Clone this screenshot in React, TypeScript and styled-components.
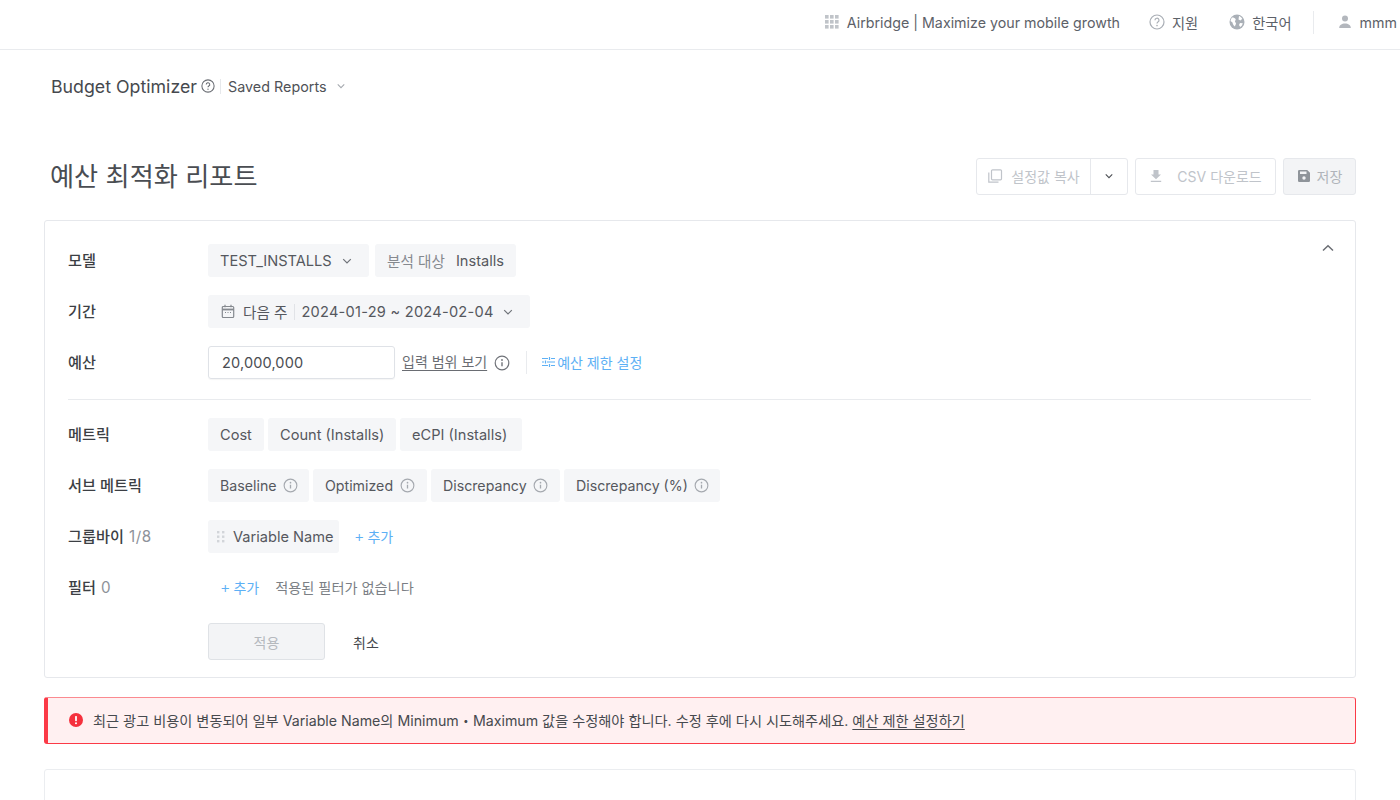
import React from "react";
import styled, { createGlobalStyle } from "styled-components";

const Global = createGlobalStyle`
  html, body { margin: 0; padding: 0; background: #fff; }
  body { font-family: Inter, "Noto Sans CJK KR", sans-serif; color: #4a4d52; overflow: hidden; height: 800px; }
  * { box-sizing: border-box; }
  svg { flex-shrink: 0; }
`;

const Page = styled.div`width: 1400px; height: 800px; overflow: hidden;`;

const TopBar = styled.header`
  height: 50px; border-bottom: 1px solid #e9ebee;
  display: flex; align-items: center; justify-content: flex-end;
  font-size: 14.25px; color: #5d6168; padding: 0 3px 5px 0;
`;
const TopItem = styled.div<{ $gap?: number; $ml?: number }>`
  display: flex; align-items: center; gap: ${p => p.$gap ?? 7}px; margin-left: ${p => p.$ml ?? 0}px; white-space: nowrap;
`;
const TopDivider = styled.div`width: 1px; height: 23px; background: #e9ebee; margin-left: 21px;`;

const SubBar = styled.div`display: flex; align-items: center; height: 24px; margin: 24px 0 0 51px;`;
const ProductTitle = styled.div`font-size: 17.75px; color: #46494e; margin-right: 4px;`;
const SubDivider = styled.div`width: 1px; height: 15px; background: #e6e8eb; margin: 0 7px 0 5px;`;
const SavedReports = styled.div`font-size: 14.35px; color: #4f5257; display: flex; align-items: center; gap: 8px;`;

const TitleRow = styled.div`
  display: flex; align-items: flex-start; justify-content: space-between;
  padding: 0 44px 0 50px; margin-top: 60px; height: 62px;
`;
const PageTitle = styled.h1`font-size: 26.2px; font-weight: 400; margin: 0; color: #4a4d52; line-height: 37px;`;
const Actions = styled.div`display: flex; gap: 7px;`;
const GhostGroup = styled.div`display: flex; height: 37px; border: 1px solid #e6e8ec; border-radius: 3px; background: #fff;`;
const GhostPart = styled.div<{ $w: number; $divider?: boolean }>`
  width: ${p => p.$w}px; display: flex; align-items: center; justify-content: center; gap: 8px; padding-bottom: 1px;
  font-size: 14px; color: #c0c4ca; ${p => p.$divider ? "border-left: 1px solid #e6e8ec;" : ""}
`;
const CsvText = styled.span`margin-left: 6px;`;
const SaveButton = styled.div`
  width: 73px; height: 37px; background: #f3f4f6; border: 1px solid #e6e8ec; border-radius: 3px; padding-bottom: 1px;
  display: flex; align-items: center; justify-content: center; gap: 6px; font-size: 14px; color: #b0b4ba;
`;

const Card = styled.section`
  position: relative; margin: 0 44px; height: 458px; border: 1px solid #e6e8ec; border-radius: 3px;
  padding: 23px 44px 0 23px;
`;
const Collapse = styled.div`position: absolute; top: 19px; right: 19px; line-height: 0;`;
const Row = styled.div<{ $h?: number; $mb?: number }>`
  display: flex; align-items: center; height: ${p => p.$h ?? 33}px; margin-bottom: ${p => p.$mb ?? 18}px;
`;
const Label = styled.div`width: 140px; font-size: 15.2px; color: #3c3f44; font-weight: 500; flex: none; padding-bottom: 4px; white-space: nowrap;`;
const Count = styled.span`font-weight: 400; color: #8d9299; margin-left: 5px; letter-spacing: 0.6px;`;
const Controls = styled.div<{ $gap?: number }>`display: flex; align-items: center; gap: ${p => p.$gap ?? 4}px;`;
const Chip = styled.div<{ $w?: number; $pl?: number; $pr?: number; $gap?: number; $fs?: number }>`
  height: 33px; background: #f5f6f8; border-radius: 3px; display: flex; align-items: center;
  ${p => p.$w ? `width: ${p.$w}px; justify-content: space-between;` : ""}
  padding: 0 ${p => p.$pr ?? 12}px 0 ${p => p.$pl ?? 12}px; gap: ${p => p.$gap ?? 6}px;
  font-size: ${p => p.$fs ?? 14.6}px; color: #55585e; white-space: nowrap;
`;
const Muted = styled.span`color: #85898f;`;
const DateText = styled.span`letter-spacing: 0.25px;`;
const PeriodText = styled.span`margin-left: 1px;`;
const ChipDivider = styled.span`width: 1px; height: 16px; background: #e1e3e7; margin-right: -1px;`;
const BudgetInput = styled.div`
  width: 187px; height: 33px; border: 1px solid #dfe2e7; border-radius: 3px; padding-left: 13px;
  display: flex; align-items: center; font-size: 14.5px; color: #4a4d52; letter-spacing: 0.15px; margin-right: 3px;
  box-shadow: 0 1px 1px rgba(0,0,0,.04);
`;
const LinkText = styled.span`font-size: 14px; color: #6a6d73; text-decoration: underline; text-underline-offset: 3px; padding-bottom: 3px; margin-right: 3px;`;
const VSep = styled.div`width: 1px; height: 23px; background: #e9ebee; margin: 0 11px 0 12px;`;
const Blue = styled.span<{ $ml?: number }>`
  font-size: 14px; color: #5db0f5; display: inline-flex; align-items: center; gap: 2px; margin-left: ${p => p.$ml ?? 0}px; padding-bottom: 2px;
`;
const Plus = styled.span`font-size: 16px; font-weight: 300; line-height: 1; margin-right: 1px;`;
const Rule = styled.div`height: 1px; background: #e9ebee; margin: 0 0 18px 0;`;
const Hint = styled.span`font-size: 14.2px; color: #7b7f85; margin-left: 16px; padding-bottom: 2px;`;
const SpacerCol = styled.span`width: 140px; flex: none;`;
const ApplyBtn = styled.div`
  width: 117px; height: 37px; background: #f3f4f6; border: 1px solid #dfe2e6; border-radius: 3px;
  display: flex; align-items: center; justify-content: center; font-size: 14px; color: #b5b9be;
`;
const Cancel = styled.div`font-size: 14px; color: #45484d; margin-left: 28px;`;

const Banner = styled.div`
  margin: 19px 44px 0; height: 47px; background: #fff0f1; border: 1px solid #fb3a47; border-left-width: 4px;
  border-top-color: #fb8a90; border-radius: 3px; display: flex; align-items: center; padding: 0 0 2px 21px; gap: 10px;
  font-size: 14.2px; color: #46494e; white-space: nowrap;
`;
const BannerLink = styled.span`text-decoration: underline; text-underline-offset: 3px; margin-left: 4px;`;
const NextCard = styled.div`margin: 25px 44px 0; height: 60px; border: 1px solid #ebedf0; border-radius: 3px;`;

const Chev = ({ c = "#6f7379", s = 14 }: { c?: string; s?: number }) => (
  <svg width={s} height={s} viewBox="0 0 14 14" fill="none"><path d="M3.2 5.2 7 9l3.8-3.8" stroke={c} strokeWidth="1.2" /></svg>
);
const Info = ({ c = "#9ea3a9", s = 15 }: { c?: string; s?: number }) => (
  <svg width={s} height={s} viewBox="0 0 16 16" fill="none">
    <circle cx="8" cy="8" r="6.8" stroke={c} strokeWidth="1.2" />
    <circle cx="8" cy="5" r=".9" fill={c} />
    <path d="M8 7.2v4" stroke={c} strokeWidth="1.4" />
  </svg>
);
const Help = ({ c = "#a9aeb5", s = 16 }: { c?: string; s?: number }) => (
  <svg width={s} height={s} viewBox="0 0 16 16" fill="none">
    <circle cx="8" cy="8" r="7" stroke={c} strokeWidth="1.2" />
    <path d="M6 6.3A2 2 0 1 1 8.9 8c-.6.4-.9.7-.9 1.5" stroke={c} strokeWidth="1.2" />
    <circle cx="8" cy="11.6" r=".8" fill={c} />
  </svg>
);
const Grid = () => (
  <svg width="14" height="14" viewBox="0 0 14 14" fill="#c0c4c9">
    {[0, 5, 10].flatMap(y => [0, 5, 10].map(x => <rect key={`${x}-${y}`} x={x} y={y} width="3.6" height="3.6" />))}
  </svg>
);
const Globe = () => (
  <svg width="16" height="16" viewBox="0 0 16 16">
    <circle cx="8" cy="8" r="7.5" fill="#aab0b7" />
    <path d="M3 3.5c2 0 3 .6 3.6 1.6.5 1-.6 1.4-.6 2.3 0 .8 1 1 1 2s-.8 1.3-1 3c-1.5-.8-2.2-2.5-2.5-4L1.5 7C1.8 5.5 2.2 4.4 3 3.5ZM10 2c1 .3 2.5 1.3 3.3 2.8L11.5 6.5 9.5 5.5 10 2ZM11 9l2.8.2c-.3 1.500-1.200 3-2.600 3.800L10 11l1-2Z" fill="#fff" />
  </svg>
);
const User = () => (
  <svg width="16" height="16" viewBox="0 0 16 16" fill="#b3b7bd">
    <circle cx="8" cy="4.6" r="3" /><path d="M2.2 14c0-3 2.6-4.5 5.8-4.500s5.800 1.500 5.800 4.500Z" />
  </svg>
);
const Copy = () => (
  <svg width="16" height="16" viewBox="0 0 16 16" fill="none" stroke="#c0c4ca" strokeWidth="1.2">
    <rect x="4.5" y="1.8" width="10" height="10" rx="1" /><path d="M1.8 4.5v9.7h9.7" />
  </svg>
);
const Download = () => (
  <svg width="14" height="14" viewBox="0 0 14 14" fill="#c0c4ca"><path d="M4.5 1h5v4.5H12L7 10.3 2 5.5h2.500ZM1.800 11.800h10.400V13H1.800Z" /></svg>
);
const Save = () => (
  <svg width="14" height="14" viewBox="0 0 14 14" fill="#8f949a">
    <path d="M2.2 1h8L13 3.800v8A1.200 1.200 0 0 1 11.800 13H2.200A1.200 1.200 0 0 1 1 11.800V2.200A1.200 1.200 0 0 1 2.200 1Z" />
    <rect x="3" y="2.5" width="6.5" height="2.5" fill="#f3f4f6" /><circle cx="7" cy="9" r="1.7" fill="#f3f4f6" />
  </svg>
);
const Calendar = () => (
  <svg width="14" height="15" viewBox="0 0 14 15" fill="none" stroke="#85898f" strokeWidth="1.2">
    <rect x="1.3" y="2.5" width="11.4" height="11" rx="1" /><path d="M1.3 5.5h11.4" strokeWidth="1.8" /><path d="M4 .8v2.400M10 .8v2.400" /><path d="M4 8.500h1M6.500 8.500h1M9 8.500h1" />
  </svg>
);
const Sliders = () => (
  <svg width="13" height="12" viewBox="0 0 13 12" fill="none" stroke="#5db0f5" strokeWidth="1.2">
    <path d="M0 2.5h6M9 2.500h4M0 6h2M5 6h8M0 9.500h6M9 9.500h4" /><path d="M7.500 1v3M3.500 4.500v3M7.500 8v3" />
  </svg>
);
const Drag = () => (
  <svg width="8" height="12" viewBox="0 0 8 12" fill="#d2d5d9">
    {[0, 4.5, 9].flatMap(y => [0, 5].map(x => <rect key={`${x}-${y}`} x={x} y={y} width="2.4" height="2.4" />))}
  </svg>
);
const Alert = () => (
  <svg width="14" height="14" viewBox="0 0 14 14">
    <circle cx="7" cy="7" r="7" fill="#f5303d" /><rect x="6.1" y="3" width="1.8" height="5.2" rx=".6" fill="#fff" /><circle cx="7" cy="10.2" r="1.05" fill="#fff" />
  </svg>
);

const metrics = [
  { name: "Cost", w: 56 },
  { name: "Count (Installs)", w: 128 },
  { name: "eCPI (Installs)", w: 122 },
];
const subMetrics = [
  { name: "Baseline", w: 101 },
  { name: "Optimized", w: 114 },
  { name: "Discrepancy", w: 129 },
  { name: "Discrepancy (%)", w: 156 },
];

export default function App() {
  return (
    <Page>
      <Global />
      <TopBar>
        <TopItem $gap={8}><Grid />Airbridge | Maximize your mobile growth</TopItem>
        <TopItem $ml={29}><Help />지원</TopItem>
        <TopItem $ml={31}><Globe />한국어</TopItem>
        <TopDivider />
        <TopItem $ml={23}><User />mmm</TopItem>
      </TopBar>
      <SubBar>
        <ProductTitle>Budget Optimizer</ProductTitle>
        <Help c="#6a6d73" s={14} />
        <SubDivider />
        <SavedReports>Saved Reports <Chev c="#a5a9af" s={12} /></SavedReports>
      </SubBar>
      <TitleRow>
        <PageTitle>예산 최적화 리포트</PageTitle>
        <Actions>
          <GhostGroup>
            <GhostPart $w={113}><Copy />설정값 복사</GhostPart>
            <GhostPart $w={37} $divider><Chev c="#4a4d52" s={12} /></GhostPart>
          </GhostGroup>
          <GhostGroup>
            <GhostPart $w={139}><Download /><CsvText>CSV 다운로드</CsvText></GhostPart>
          </GhostGroup>
          <SaveButton><Save />저장</SaveButton>
        </Actions>
      </TitleRow>
      <Card>
        <Collapse>
          <svg width="16" height="16" viewBox="0 0 16 16" fill="none"><path d="M3 10.5 8 5.8l5 4.7" stroke="#6a6d73" strokeWidth="1.5" /></svg>
        </Collapse>
        <Row>
          <Label>모델</Label>
          <Controls $gap={6}>
            <Chip $w={161} $pr={15}>TEST_INSTALLS <Chev /></Chip>
            <Chip $w={141}><Muted>분석 대상</Muted>Installs</Chip>
          </Controls>
        </Row>
        <Row>
          <Label>기간</Label>
          <Chip $pl={13} $pr={15} $gap={7}>
            <Calendar /><PeriodText>다음 주</PeriodText><ChipDivider /><DateText>2024-01-29 ~ 2024-02-04</DateText><Chev />
          </Chip>
        </Row>
        <Row $mb={20}>
          <Label>예산</Label>
          <Controls>
            <BudgetInput>20,000,000</BudgetInput>
            <LinkText>입력 범위 보기</LinkText>
            <Info c="#707379" s={16} />
            <VSep />
            <Blue><Sliders />예산 제한 설정</Blue>
          </Controls>
        </Row>
        <Rule />
        <Row>
          <Label>메트릭</Label>
          <Controls>{metrics.map(m => <Chip key={m.name} $w={m.w}>{m.name}</Chip>)}</Controls>
        </Row>
        <Row>
          <Label>서브 메트릭</Label>
          <Controls>{subMetrics.map(m => <Chip key={m.name} $w={m.w} $fs={14.2}>{m.name}<Info c="#a5a9af" s={15} /></Chip>)}</Controls>
        </Row>
        <Row>
          <Label>그룹바이<Count>1/8</Count></Label>
          <Chip $w={131} $pl={9} $pr={7} $gap={8}><Drag />Variable Name</Chip>
          <Blue $ml={15}><Plus>+</Plus>추가</Blue>
        </Row>
        <Row $mb={19}>
          <Label>필터<Count>0</Count></Label>
          <Blue $ml={12}><Plus>+</Plus>추가</Blue>
          <Hint>적용된 필터가 없습니다</Hint>
        </Row>
        <Row $h={37}>
          <SpacerCol />
          <ApplyBtn>적용</ApplyBtn>
          <Cancel>취소</Cancel>
        </Row>
      </Card>
      <Banner>
        <Alert />
        <span>최근 광고 비용이 변동되어 일부 Variable Name의 Minimum・Maximum 값을 수정해야 합니다. 수정 후에 다시 시도해주세요.<BannerLink>예산 제한 설정하기</BannerLink></span>
      </Banner>
      <NextCard />
    </Page>
  );
}
